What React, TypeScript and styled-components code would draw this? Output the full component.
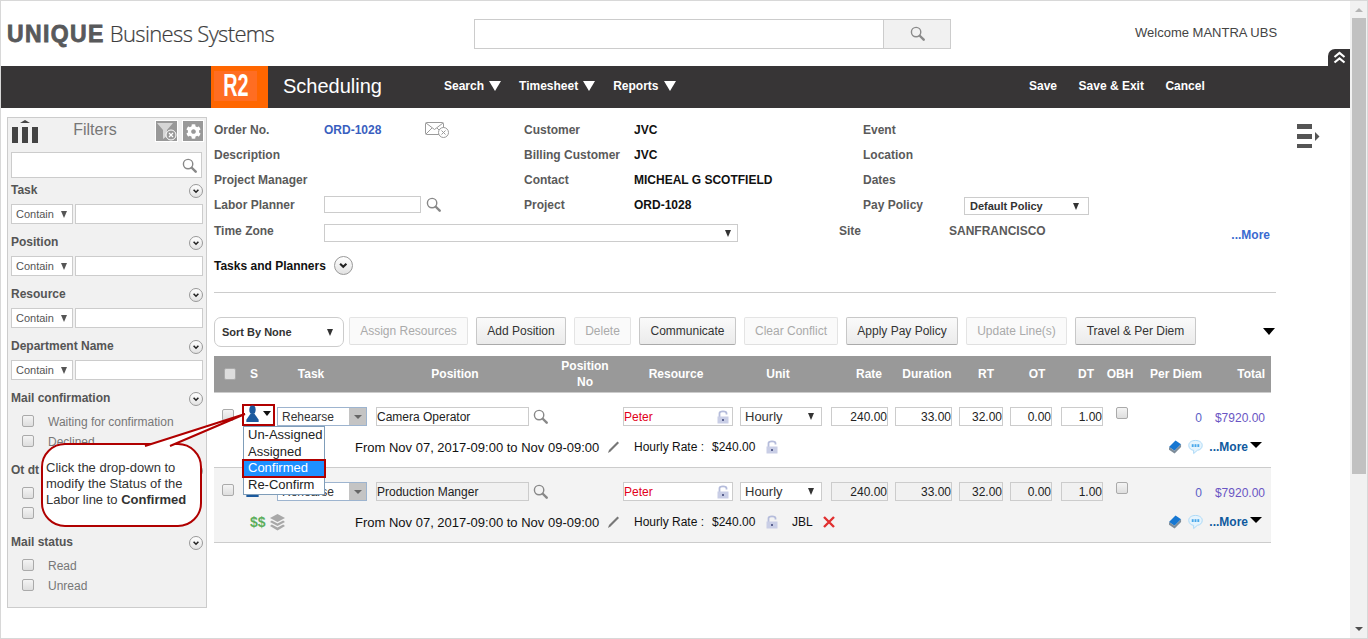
import styled, { createGlobalStyle } from "styled-components";
import { FaCog } from "react-icons/fa";

const GlobalStyle = createGlobalStyle`
  html, body {
    margin: 0;
    padding: 0;
    overflow: hidden;
    background: #fff;
    font-family: "Liberation Sans", Arial, sans-serif;
    font-size: 12px;
  }
  * { box-sizing: border-box; }
`;

const ROW_COLUMNS = "29px 34px 99px 247px 117px 91px 64px 64px 51px 51px 55px 34px 58px 63px";
const HEAD_COLUMNS = "29px 22px 92px 196px 64px 118px 86px 78px 56px 62px 40px 49px 28px 84px 53px";

const Shell = styled.div`
  position: relative;
  display: flex;
  width: 1368px;
  height: 639px;
  border: 1px solid #d8d8d8;
  overflow: hidden;
`;

const Page = styled.div`
  width: 1349px;
  display: flex;
  flex-direction: column;
`;

const Scrollbar = styled.div`
  width: 17px;
  background: #f1f1f1;
  padding: 17px 1px 0 2px;
  position: relative;
`;

const ScrollThumb = styled.div`
  height: 456px;
  background: #c1c1c1;
`;

const ScrollArrow = styled.span`
  position: absolute;
  top: 7px;
  left: 5px;
  width: 0;
  height: 0;
  border-left: 4px solid transparent;
  border-right: 4px solid transparent;
  border-bottom: 4px solid #b5b5b5;
`;

const ScrollArrowDown = styled.span`
  position: absolute;
  bottom: 7px;
  left: 5px;
  width: 0;
  height: 0;
  border-left: 4px solid transparent;
  border-right: 4px solid transparent;
  border-top: 4px solid #505050;
`;

const TopBar = styled.header`
  position: relative;
  height: 65px;
  display: grid;
  grid-template-columns: 472px 478px 1fr;
  align-items: center;
  padding-top: 2px;
`;

const Logo = styled.div`
  display: flex;
  align-items: baseline;
  padding-left: 6px;
  margin-top: -4px;
  white-space: nowrap;
`;

const LogoStrong = styled.span`
  font-size: 23px;
  font-weight: 700;
  color: #58595b;
  letter-spacing: 1.4px;
  -webkit-text-stroke: 0.8px #58595b;
`;

const LogoLight = styled.span`
  margin-left: 5px;
  font-family: "Open Sans", sans-serif;
  font-size: 22px;
  font-weight: 300;
  color: #3c3c3c;
  letter-spacing: -0.65px;
  -webkit-text-stroke: 0.2px #3c3c3c;
`;

const GlobalSearch = styled.div`
  display: flex;
  height: 30px;
  border: 1px solid #ccc;
  margin: -2px 0 0 1px;
`;

const GlobalSearchInput = styled.div`
  flex: 1;
  background: #fff;
`;

const GlobalSearchButton = styled.div`
  width: 67px;
  display: flex;
  align-items: center;
  justify-content: center;
  background: #f1f1f1;
  border-left: 1px solid #ccc;
  color: #8a8a8a;
`;

const Welcome = styled.div`
  padding-left: 184px;
  margin-top: -4px;
  font-size: 13px;
  color: #444;
  white-space: nowrap;
`;

const CollapseTab = styled.div`
  position: absolute;
  right: 0;
  bottom: 0;
  width: 22px;
  height: 17px;
  display: flex;
  align-items: center;
  justify-content: center;
  background: #373536;
  border-top-left-radius: 7px;
`;

const NavBar = styled.nav`
  height: 42px;
  display: flex;
  align-items: center;
  padding-left: 210px;
  padding-bottom: 2px;
  background: #373536;
  color: #fff;
`;

const AppBadge = styled.div`
  width: 57px;
  height: 42px;
  margin-bottom: -2px;
  padding: 5px 11px 7px 3px;
  background: #ff6600;
`;

const AppBadgeInner = styled.div`
  height: 30px;
  width: 43px;
  display: flex;
  align-items: center;
  justify-content: center;
  background: #ff6d22;
`;

const AppBadgeText = styled.span`
  font-size: 31px;
  line-height: 30px;
  font-weight: 700;
  transform: scaleX(0.64);
`;

const NavTitle = styled.div`
  width: 176px;
  padding-left: 15px;
  font-size: 20px;
  white-space: nowrap;
`;

const NavMenu = styled.div`
  width: 585px;
  display: flex;
  gap: 18px;
`;

const NavItem = styled.div`
  display: flex;
  align-items: center;
  gap: 5px;
  font-size: 12px;
  font-weight: 700;
  white-space: nowrap;
`;

const NavActions = styled.div`
  display: flex;
  gap: 21.5px;
  font-size: 12px;
  font-weight: 700;
  white-space: nowrap;
`;

const Triangle = styled.span<{ $w: number; $h: number; $color: string }>`
  display: inline-block;
  flex: none;
  width: 0;
  height: 0;
  border-left: ${(p) => p.$w / 2}px solid transparent;
  border-right: ${(p) => p.$w / 2}px solid transparent;
  border-top: ${(p) => p.$h}px solid ${(p) => p.$color};
`;

const Body = styled.div`
  display: flex;
  padding: 9px 0 0 6px;
`;

const Sidebar = styled.aside`
  width: 200px;
  height: 491px;
  flex: none;
  padding: 0 0 0 3px;
  background: #f1f1f1;
  border: 1px solid #ccc;
`;

const SideHeader = styled.div`
  height: 34px;
  display: flex;
  align-items: flex-start;
  padding-top: 2px;
`;

const ColumnsIcon = styled.div`
  width: 27px;
  flex: none;
  padding-left: 1px;
  color: #444;
`;

const SideTitle = styled.div`
  width: 117px;
  flex: none;
  padding: 1px 3px 0 0;
  text-align: center;
  font-size: 16px;
  line-height: 18px;
  color: #777;
`;

const SideTool = styled.div<{ $w: number; $gap: number }>`
  width: ${(p) => p.$w}px;
  height: 22px;
  flex: none;
  margin-right: ${(p) => p.$gap}px;
  display: flex;
  align-items: center;
  justify-content: center;
  background: #999;
  border: 1px solid #fff;
  color: #fff;
`;

const SideSearch = styled.div`
  width: 191px;
  height: 26px;
  display: flex;
  align-items: center;
  justify-content: flex-end;
  padding-right: 4px;
  background: #fff;
  border: 1px solid #ccc;
  color: #888;
`;

const FilterGroups = styled.div`
  margin-top: 1px;
  display: flex;
  flex-direction: column;
  gap: 7px;
`;

const GroupHead = styled.div`
  height: 20px;
  width: 192px;
  display: flex;
  align-items: center;
  justify-content: space-between;
  font-size: 12px;
  font-weight: 700;
  color: #555;
`;

const GroupName = styled.span`
  padding-top: 1px;
`;

const GroupToggle = styled.span`
  margin-top: 4px;
`;

const FilterRow = styled.div`
  margin-top: 5px;
  display: flex;
  gap: 2px;
`;

const ContainSelect = styled.div`
  width: 62px;
  height: 20px;
  display: flex;
  align-items: center;
  justify-content: space-between;
  padding: 0 5px 0 4px;
  background: #fff;
  border: 1px solid #ccc;
  font-size: 11px;
  color: #555;
`;

const FilterInput = styled.div`
  width: 128px;
  height: 20px;
  background: #fff;
  border: 1px solid #ccc;
`;

const CheckList = styled.div`
  margin: 4px 0 1px;
`;

const CheckRow = styled.div`
  height: 20px;
  display: flex;
  align-items: center;
  padding-left: 11px;
  gap: 14px;
  font-size: 12px;
  color: #777;
  white-space: nowrap;
`;

const CheckLabel = styled.span`
  padding-top: 1px;
`;

const CheckBox = styled.span<{ $tone?: string }>`
  display: block;
  flex: none;
  width: 12px;
  height: 12px;
  border: 1px solid #aaa;
  border-radius: 2px;
  background: ${(p) => p.$tone || "linear-gradient(#f4f4f4, #dedede)"};
`;

const Main = styled.main`
  width: 1062px;
  margin-left: 7px;
  flex: none;
`;

const FormGrid = styled.div`
  display: grid;
  grid-template-columns: 110px 200px 110px 229px 101px 1fr;
  grid-auto-rows: 25px;
  align-items: center;
  font-size: 12px;
`;

const FieldLabel = styled.div`
  font-weight: 700;
  color: #5a5a5a;
  white-space: nowrap;
`;

const FieldValue = styled.div`
  display: flex;
  align-items: center;
  font-weight: 700;
  color: #111;
  white-space: nowrap;
`;

const PlannerCell = styled.div`
  display: flex;
  align-items: center;
  color: #888;
`;

const OrderLink = styled.span`
  width: 101px;
  color: #3a5fc0;
`;

const PlannerInput = styled.div`
  width: 97px;
  height: 17px;
  margin-right: 5px;
  background: #fff;
  border: 1px solid #ccc;
`;

const PolicySelect = styled.div`
  width: 125px;
  height: 18px;
  display: flex;
  align-items: center;
  justify-content: space-between;
  padding: 0 9px 0 5px;
  margin-top: 3px;
  border: 1px solid #ccc;
  font-size: 11px;
  font-weight: 700;
  color: #333;
`;

const ZoneRow = styled.div`
  display: grid;
  grid-template-columns: 110px 515px 110px 1fr auto;
  align-items: start;
  margin-top: 7px;
  height: 18px;
  line-height: 14px;
  font-size: 12px;
`;

const ZoneSelect = styled.div`
  width: 414px;
  height: 18px;
  display: flex;
  align-items: center;
  justify-content: flex-end;
  padding-right: 6px;
  border: 1px solid #ccc;
`;

const SiteValue = styled.div`
  font-weight: 700;
  color: #5a5a5a;
`;

const MoreLink = styled.div`
  align-self: end;
  padding-right: 6px;
  font-weight: 700;
  color: #3a6ad0;
`;

const TasksRow = styled.div`
  margin-top: 13px;
  height: 20px;
  display: flex;
  align-items: center;
  gap: 8px;
  font-size: 12px;
  font-weight: 700;
  color: #111;
`;

const TasksText = styled.span`
  padding-top: 2px;
`;

const Round = styled.span<{ $size: number }>`
  flex: none;
  width: ${(p) => p.$size}px;
  height: ${(p) => p.$size}px;
  display: flex;
  align-items: center;
  justify-content: center;
  border: 1px solid #999;
  border-radius: 50%;
  background: linear-gradient(#fff, #e2e2e2);
`;

const Rule = styled.hr`
  margin: 17px 0 0;
  border: 0;
  border-top: 1px solid #ccc;
`;

const Toolbar = styled.div`
  margin-top: 24px;
  height: 30px;
  display: flex;
  align-items: flex-start;
  gap: 8px;
`;

const SortSelect = styled.div`
  width: 130px;
  height: 30px;
  margin-right: -3px;
  display: flex;
  align-items: center;
  justify-content: space-between;
  padding: 0 10px 0 7px;
  border: 1px solid #ccc;
  border-radius: 7px;
  font-size: 11px;
  font-weight: 700;
  color: #333;
`;

const ToolButton = styled.div<{ $w: number; $off?: boolean }>`
  width: ${(p) => p.$w}px;
  height: 28px;
  display: flex;
  align-items: center;
  justify-content: center;
  border: 1px solid ${(p) => (p.$off ? "#e4e4e4" : "#c8c8c8")};
  border-bottom-color: ${(p) => (p.$off ? "#e0e0e0" : "#aaa")};
  border-radius: 2px;
  background: ${(p) => (p.$off ? "#fafafa" : "linear-gradient(#fafafa, #ebebeb)")};
  font-size: 12px;
  color: ${(p) => (p.$off ? "#aaa" : "#333")};
  white-space: nowrap;
`;

const ToolbarEnd = styled.div`
  display: flex;
  margin: 11px 1px 0 auto;
`;

const Table = styled.section`
  width: 1057px;
  margin-top: 9px;
`;

const HeadRow = styled.div`
  height: 37px;
  display: grid;
  grid-template-columns: ${HEAD_COLUMNS};
  align-items: center;
  background: #999;
  border-bottom: 1px solid #ccc;
  color: #fff;
  font-size: 12px;
  font-weight: 700;
  line-height: 16px;
`;

const HeadCell = styled.div<{ $right?: number }>`
  text-align: ${(p) => (p.$right ? "right" : "center")};
  padding-right: ${(p) => p.$right || 0}px;
  white-space: nowrap;
`;

const HeadCheck = styled.div`
  padding-left: 10px;
`;

const LineRow = styled.div<{ $alt?: boolean }>`
  height: 75px;
  padding-top: 14px;
  background: ${(p) => (p.$alt ? "#f3f3f3" : "#fff")};
  border-bottom: 1px solid #ccc;
`;

const LineGrid = styled.div`
  height: 20px;
  display: grid;
  grid-template-columns: ${ROW_COLUMNS};
  align-items: start;
  font-size: 12px;
`;

const RowCheck = styled.div`
  padding: 2px 0 0 8px;
`;

const StatusCell = styled.div`
  position: relative;
  height: 20px;
`;

const StatusBox = styled.div<{ $marked?: boolean }>`
  width: 33px;
  height: 22px;
  margin: -3px 0 0 -1px;
  display: flex;
  align-items: flex-end;
  gap: 3px;
  padding: 0 0 1px 2px;
  border: 2px solid ${(p) => (p.$marked ? "#b00000" : "transparent")};
`;

const StatusArrow = styled.span`
  display: flex;
  margin: 0 0 7px 1px;
`;

const StatusMenu = styled.ul`
  position: absolute;
  top: 19px;
  left: 0;
  z-index: 3;
  width: 82px;
  height: 69px;
  margin: 0;
  padding: 0;
  list-style: none;
  background: #fff;
  border: 1px solid #7f9db9;
`;

const StatusItem = styled.li<{ $line: number; $active?: boolean }>`
  height: ${(p) => (p.$active ? 19 : 16)}px;
  line-height: ${(p) => p.$line}px;
  padding-left: 4px;
  font-size: 13px;
  color: ${(p) => (p.$active ? "#fff" : "#222")};
  white-space: nowrap;
  ${(p) =>
    p.$active
      ? `
    margin: 0 -2px;
    background: #1e90ff;
    border: 2px solid #b00000;
  `
      : ""}
`;

const TaskSelect = styled.div`
  width: 90px;
  height: 19px;
  display: flex;
  align-items: center;
  justify-content: space-between;
  padding-left: 4px;
  background: #fff;
  border: 1px solid #9db4cf;
  color: #333;
`;

const TaskArrow = styled.span`
  width: 17px;
  height: 100%;
  display: flex;
  align-items: center;
  justify-content: center;
  background: #c4c4c4;
`;

const PositionCell = styled.div`
  display: flex;
  align-items: center;
  gap: 4px;
  color: #888;
`;

const TextField = styled.input<{ $w: number; $muted?: boolean; $right?: boolean }>`
  width: ${(p) => p.$w}px;
  height: 19px;
  padding: 0;
  border: 1px solid #ccc;
  border-radius: 0;
  outline: none;
  background: ${(p) => (p.$muted ? "#f1f1f1" : "#fff")};
  font: 12px "Liberation Sans", Arial, sans-serif;
  color: #222;
  text-align: ${(p) => (p.$right ? "right" : "left")};
`;

const ResourceField = styled.div`
  width: 110px;
  height: 19px;
  display: flex;
  align-items: center;
  justify-content: space-between;
  padding: 0 3px 0 0;
  background: #fff;
  border: 1px solid #ccc;
  color: #e2001a;
`;

const UnitSelect = styled.div`
  width: 82px;
  height: 19px;
  display: flex;
  align-items: center;
  justify-content: space-between;
  padding: 0 7px 0 4px;
  background: #fff;
  border: 1px solid #ccc;
  font-size: 13px;
  color: #333;
`;

const PerDiem = styled.div`
  padding: 4px 6px 0 0;
  text-align: right;
  color: #5b5fc7;
`;

const TotalValue = styled.div`
  padding: 4px 6px 0 0;
  text-align: right;
  color: #6a55c4;
  white-space: nowrap;
`;

const DetailLine = styled.div`
  height: 20px;
  margin-top: 10px;
  display: flex;
  align-items: center;
  font-size: 12px;
  color: #111;
  white-space: nowrap;
`;

const DetailBadges = styled.div`
  width: 141px;
  padding-left: 36px;
  display: flex;
  align-items: center;
  gap: 4px;
`;

const Dollars = styled.span`
  font-size: 14px;
  font-weight: 700;
  color: #5cae5c;
`;

const DateRange = styled.div`
  width: 252px;
  font-size: 13px;
`;

const RateLabel = styled.div`
  width: 78px;
  margin-left: 14px;
`;

const RateValue = styled.div`
  width: 54px;
`;

const Vendor = styled.div`
  margin: 0 10px 0 14px;
`;

const RowActions = styled.div`
  margin-left: auto;
  padding-right: 9px;
  display: flex;
  align-items: center;
`;

const RowMore = styled.span`
  margin: 0 2px 0 6px;
  font-weight: 700;
  color: #0f5a9e;
`;

const RowMoreArrow = styled.span`
  margin-top: -5px;
  display: flex;
`;

const Rail = styled.div`
  margin-left: 21px;
  padding-top: 7px;
`;

const Callout = styled.div`
  position: absolute;
  left: 40px;
  top: 442px;
  z-index: 4;
  width: 161px;
  height: 84px;
  padding: 15px 0 0 3px;
  background: #fff;
  border: 2px solid #b00000;
  border-radius: 24px;
  font-size: 13px;
  line-height: 16px;
  color: #333;
  white-space: nowrap;
`;

const CalloutTail = styled.svg`
  position: absolute;
  left: 101px;
  top: -33px;
`;

const Magnifier = ({ size = 15 }: { size?: number }) => (
  <svg width={size} height={size} viewBox="0 0 16 16" fill="none" stroke="currentColor">
    <circle cx="6.5" cy="6.5" r="5" strokeWidth="1.5" />
    <path d="M10.4 10.4 14.6 14.6" strokeWidth="2.6" strokeLinecap="round" />
  </svg>
);

const ChevronRound = ({ size }: { size: number }) => (
  <Round $size={size}>
    <svg width={size / 2 + 1} height={size / 2 + 1} viewBox="0 0 10 10" fill="none" stroke="#222" strokeWidth="2">
      <path d="M2 3.5 5 6.5 8 3.5" />
    </svg>
  </Round>
);

const ColumnBars = () => (
  <svg width="26" height="23" viewBox="0 0 26 23" fill="#444" style={{ display: "block" }}>
    <path d="M13 0 18 3H8Z" />
    <rect x="0" y="7" width="6" height="16" />
    <rect x="10" y="7" width="6" height="16" />
    <rect x="20" y="7" width="6" height="16" />
  </svg>
);

const FunnelClear = () => (
  <svg width="21" height="19" viewBox="0 0 21 19">
    <path d="M1 1H17L11 8V14L7 17V8Z" fill="#d6d6d6" />
    <circle cx="15" cy="13" r="5" fill="#999" stroke="#fff" strokeWidth="1" />
    <path d="M13 11 17 15M17 11 13 15" stroke="#fff" strokeWidth="1.2" />
  </svg>
);

const Envelope = () => (
  <svg width="24" height="16" viewBox="0 0 24 16" fill="none" stroke="#9a9a9a">
    <rect x="0.5" y="0.5" width="18" height="12" rx="1" fill="#fff" />
    <path d="M1 1 9.5 7.5 18 1M1 12 7 6M18 12 12 6" />
    <circle cx="18.5" cy="10.5" r="5" fill="#fff" />
    <path d="M16.5 8.5 20.5 12.5M20.5 8.5 16.5 12.5" />
  </svg>
);

const Person = () => (
  <svg width="13" height="18" viewBox="0 0 13 19" fill="#1c5a9e">
    <ellipse cx="6.5" cy="5" rx="3.4" ry="4.6" />
    <path d="M4.6 9 0 15.5V18H13V15.5L8.4 9Z" />
  </svg>
);

const OpenLock = () => (
  <svg width="12" height="14" viewBox="0 0 12 14" fill="none">
    <path d="M2.5 7V3.2C2.5 0.8 9.5 0.8 9.5 3.2V4.5" stroke="#b5bcdb" strokeWidth="1.8" />
    <rect x="0.5" y="6.5" width="11" height="7" fill="#c9cee6" />
    <rect x="5" y="9" width="2" height="2" fill="#5c6390" />
  </svg>
);

const Layers = () => (
  <svg width="15" height="17" viewBox="0 0 15 17" fill="#a8a8a8">
    <path d="M7.5 0 15 4 7.5 8 0 4Z" />
    <path d="M1.8 6.6 7.5 9.6 13.2 6.6 15 8 7.5 12 0 8Z" />
    <path d="M1.8 10.6 7.5 13.6 13.2 10.6 15 12 7.5 16.5 0 12Z" />
  </svg>
);

const Pencil = () => (
  <svg width="13" height="14" viewBox="0 0 13 14" fill="none">
    <path d="M1 13 2 10 10.5 1.5 12 3 3.5 11.5Z" fill="#777" />
  </svg>
);

const RedCross = () => (
  <svg width="12" height="12" viewBox="0 0 12 12" stroke="#e03030" strokeWidth="2.4">
    <path d="M1 1 11 11M11 1 1 11" />
  </svg>
);

const Book = () => (
  <svg width="13" height="14" viewBox="0 0 14 14">
    <path d="M0 7 7 0 13 4 6 11Z" fill="#1677d2" />
    <path d="M0 7 6 11 13 4V7L6 14 0 10Z" fill="#7d8c99" />
  </svg>
);

const Chat = () => (
  <svg width="15" height="16" viewBox="0 0 16 16" style={{ marginLeft: 6 }}>
    <path d="M8 1C3.5 1 .8 3.2.8 6.3S3.5 11.5 6 11.5V15L10 11.5C13 11.3 15.2 9.2 15.2 6.3S12.5 1 8 1Z" fill="#e6f4fd" stroke="#a7d8f6" />
    <rect x="4" y="5" width="2" height="3" fill="#4aa8ea" />
    <rect x="7" y="5" width="2" height="3" fill="#4aa8ea" />
    <rect x="10" y="5" width="2" height="3" fill="#4aa8ea" />
  </svg>
);

const DoubleUp = () => (
  <svg width="13" height="13" viewBox="0 0 13 13" fill="none" stroke="#fff" strokeWidth="2.2">
    <path d="M1.5 6 6.5 2 11.5 6M1.5 11.5 6.5 7.5 11.5 11.5" />
  </svg>
);

const RailMenu = () => (
  <svg width="23" height="24" viewBox="0 0 23 24" fill="#555" style={{ display: "block" }}>
    <rect width="15" height="5" />
    <rect y="10" width="15" height="5" />
    <rect y="20" width="15" height="4" />
    <path d="M18 8 22.5 12.5 18 17Z" />
  </svg>
);

const SELECT_ARROW = <Triangle $w={7} $h={7} $color="#333" />;

type LineProps = {
  position: string;
  alt?: boolean;
  menu?: boolean;
  vendor?: string;
};

const Line = ({ position, alt, menu, vendor }: LineProps) => (
  <LineRow $alt={alt}>
    <LineGrid>
      <RowCheck>
        <CheckBox />
      </RowCheck>
      <StatusCell>
        <StatusBox $marked={menu}>
          <Person />
          {menu && (
            <StatusArrow>
              <Triangle $w={8} $h={5} $color="#111" />
            </StatusArrow>
          )}
        </StatusBox>
        {menu && (
          <StatusMenu>
            <StatusItem $line={15}>Un-Assigned</StatusItem>
            <StatusItem $line={17}>Assigned</StatusItem>
            <StatusItem $line={13} $active>
              Confirmed
            </StatusItem>
            <StatusItem $line={13}>Re-Confirm</StatusItem>
          </StatusMenu>
        )}
      </StatusCell>
      <TaskSelect>
        Rehearse
        <TaskArrow>
          <Triangle $w={8} $h={4} $color="#666" />
        </TaskArrow>
      </TaskSelect>
      <PositionCell>
        <TextField readOnly $w={153} $muted={alt} value={position} />
        <Magnifier />
      </PositionCell>
      <ResourceField>
        Peter
        <OpenLock />
      </ResourceField>
      <UnitSelect>
        Hourly
        {SELECT_ARROW}
      </UnitSelect>
      <TextField readOnly $w={57} $right $muted={alt} value="240.00" />
      <TextField readOnly $w={57} $right $muted={alt} value="33.00" />
      <TextField readOnly $w={44} $right $muted={alt} value="32.00" />
      <TextField readOnly $w={42} $right $muted={alt} value="0.00" />
      <TextField readOnly $w={42} $right $muted={alt} value="1.00" />
      <CheckBox />
      <PerDiem>0</PerDiem>
      <TotalValue>$7920.00</TotalValue>
    </LineGrid>
    <DetailLine>
      <DetailBadges>
        <Dollars>$$</Dollars>
        <Layers />
      </DetailBadges>
      <DateRange>From Nov 07, 2017-09:00 to Nov 09-09:00</DateRange>
      <Pencil />
      <RateLabel>Hourly Rate :</RateLabel>
      <RateValue>$240.00</RateValue>
      <OpenLock />
      {vendor && (
        <>
          <Vendor>{vendor}</Vendor>
          <RedCross />
        </>
      )}
      <RowActions>
        <Book />
        <Chat />
        <RowMore>...More</RowMore>
        <RowMoreArrow>
          <Triangle $w={12} $h={6} $color="#000" />
        </RowMoreArrow>
      </RowActions>
    </DetailLine>
  </LineRow>
);

const FilterGroup = ({ title }: { title: string }) => (
  <div>
    <GroupHead>
      <GroupName>{title}</GroupName>
      <GroupToggle>
        <ChevronRound size={14} />
      </GroupToggle>
    </GroupHead>
    <FilterRow>
      <ContainSelect>
        Contain
        <Triangle $w={7} $h={7} $color="#555" />
      </ContainSelect>
      <FilterInput />
    </FilterRow>
  </div>
);

const CheckGroup = ({ title, items }: { title: string; items: string[] }) => (
  <div>
    <GroupHead>
      <GroupName>{title}</GroupName>
      <GroupToggle>
        <ChevronRound size={14} />
      </GroupToggle>
    </GroupHead>
    <CheckList>
      {items.map((item, i) => (
        <CheckRow key={i}>
          <CheckBox />
          <CheckLabel>{item}</CheckLabel>
        </CheckRow>
      ))}
    </CheckList>
  </div>
);

const BUTTONS = [
  { label: "Assign Resources", w: 119, off: true },
  { label: "Add Position", w: 90 },
  { label: "Delete", w: 57, off: true },
  { label: "Communicate", w: 97 },
  { label: "Clear Conflict", w: 94, off: true },
  { label: "Apply Pay Policy", w: 112 },
  { label: "Update Line(s)", w: 101, off: true },
  { label: "Travel & Per Diem", w: 121 },
];

const App = () => (
  <Shell>
    <GlobalStyle />
    <Page>
      <TopBar>
        <Logo>
          <LogoStrong>UNIQUE</LogoStrong>
          <LogoLight>Business Systems</LogoLight>
        </Logo>
        <GlobalSearch>
          <GlobalSearchInput />
          <GlobalSearchButton>
            <Magnifier />
          </GlobalSearchButton>
        </GlobalSearch>
        <Welcome>Welcome MANTRA UBS</Welcome>
        <CollapseTab>
          <DoubleUp />
        </CollapseTab>
      </TopBar>
      <NavBar>
        <AppBadge>
          <AppBadgeInner>
            <AppBadgeText>R2</AppBadgeText>
          </AppBadgeInner>
        </AppBadge>
        <NavTitle>Scheduling</NavTitle>
        <NavMenu>
          <NavItem>
            Search <Triangle $w={12} $h={10} $color="#fff" />
          </NavItem>
          <NavItem>
            Timesheet <Triangle $w={12} $h={10} $color="#fff" />
          </NavItem>
          <NavItem>
            Reports <Triangle $w={12} $h={10} $color="#fff" />
          </NavItem>
        </NavMenu>
        <NavActions>
          <span>Save</span>
          <span>Save &amp; Exit</span>
          <span>Cancel</span>
        </NavActions>
      </NavBar>
      <Body>
        <Sidebar>
          <SideHeader>
            <ColumnsIcon>
              <ColumnBars />
            </ColumnsIcon>
            <SideTitle>Filters</SideTitle>
            <SideTool $w={23} $gap={4}>
              <FunnelClear />
            </SideTool>
            <SideTool $w={22} $gap={0}>
              <FaCog size={15} />
            </SideTool>
          </SideHeader>
          <SideSearch>
            <Magnifier />
          </SideSearch>
          <FilterGroups>
            <FilterGroup title="Task" />
            <FilterGroup title="Position" />
            <FilterGroup title="Resource" />
            <FilterGroup title="Department Name" />
            <CheckGroup title="Mail confirmation" items={["Waiting for confirmation", "Declined"]} />
            <CheckGroup title="Ot dt" items={["", ""]} />
            <CheckGroup title="Mail status" items={["Read", "Unread"]} />
          </FilterGroups>
        </Sidebar>
        <Main>
          <FormGrid>
            <FieldLabel>Order No.</FieldLabel>
            <FieldValue>
              <OrderLink>ORD-1028</OrderLink>
              <Envelope />
            </FieldValue>
            <FieldLabel>Customer</FieldLabel>
            <FieldValue>JVC</FieldValue>
            <FieldLabel>Event</FieldLabel>
            <div />
            <FieldLabel>Description</FieldLabel>
            <div />
            <FieldLabel>Billing Customer</FieldLabel>
            <FieldValue>JVC</FieldValue>
            <FieldLabel>Location</FieldLabel>
            <div />
            <FieldLabel>Project Manager</FieldLabel>
            <div />
            <FieldLabel>Contact</FieldLabel>
            <FieldValue>MICHEAL G SCOTFIELD</FieldValue>
            <FieldLabel>Dates</FieldLabel>
            <div />
            <FieldLabel>Labor Planner</FieldLabel>
            <PlannerCell>
              <PlannerInput />
              <Magnifier />
            </PlannerCell>
            <FieldLabel>Project</FieldLabel>
            <FieldValue>ORD-1028</FieldValue>
            <FieldLabel>Pay Policy</FieldLabel>
            <PolicySelect>
              Default Policy
              {SELECT_ARROW}
            </PolicySelect>
          </FormGrid>
          <ZoneRow>
            <FieldLabel>Time Zone</FieldLabel>
            <ZoneSelect>{SELECT_ARROW}</ZoneSelect>
            <FieldLabel>Site</FieldLabel>
            <SiteValue>SANFRANCISCO</SiteValue>
            <MoreLink>...More</MoreLink>
          </ZoneRow>
          <TasksRow>
            <TasksText>Tasks and Planners</TasksText>
            <ChevronRound size={19} />
          </TasksRow>
          <Rule />
          <Toolbar>
            <SortSelect>
              Sort By None
              {SELECT_ARROW}
            </SortSelect>
            {BUTTONS.map((b) => (
              <ToolButton key={b.label} $w={b.w} $off={b.off}>
                {b.label}
              </ToolButton>
            ))}
            <ToolbarEnd>
              <Triangle $w={12} $h={7} $color="#000" />
            </ToolbarEnd>
          </Toolbar>
          <Table>
            <HeadRow>
              <HeadCheck>
                <CheckBox $tone="#ddd" />
              </HeadCheck>
              <HeadCell>S</HeadCell>
              <HeadCell>Task</HeadCell>
              <HeadCell>Position</HeadCell>
              <HeadCell>
                Position
                <br />
                No
              </HeadCell>
              <HeadCell>Resource</HeadCell>
              <HeadCell>Unit</HeadCell>
              <HeadCell $right={17}>Rate</HeadCell>
              <HeadCell>Duration</HeadCell>
              <HeadCell>RT</HeadCell>
              <HeadCell>OT</HeadCell>
              <HeadCell $right={12}>DT</HeadCell>
              <HeadCell>OBH</HeadCell>
              <HeadCell>Per Diem</HeadCell>
              <HeadCell $right={6}>Total</HeadCell>
            </HeadRow>
            <Line position="Camera Operator" menu />
            <Line position="Production Manger" alt vendor="JBL" />
          </Table>
        </Main>
        <Rail>
          <RailMenu />
        </Rail>
      </Body>
    </Page>
    <Scrollbar>
      <ScrollArrow />
      <ScrollThumb />
      <ScrollArrowDown />
    </Scrollbar>
    <Callout>
      <CalloutTail width="104" height="37" viewBox="0 0 104 37">
        <path d="M1 34 101 2 26 34 26 37H3Z" fill="#fff" />
        <path d="M1 34 101 2 26 34" fill="none" stroke="#b00000" strokeWidth="2" />
      </CalloutTail>
      Click the drop-down to
      <br />
      modify the Status of the
      <br />
      Labor line to <b>Confirmed</b>
    </Callout>
  </Shell>
);

export default App;
